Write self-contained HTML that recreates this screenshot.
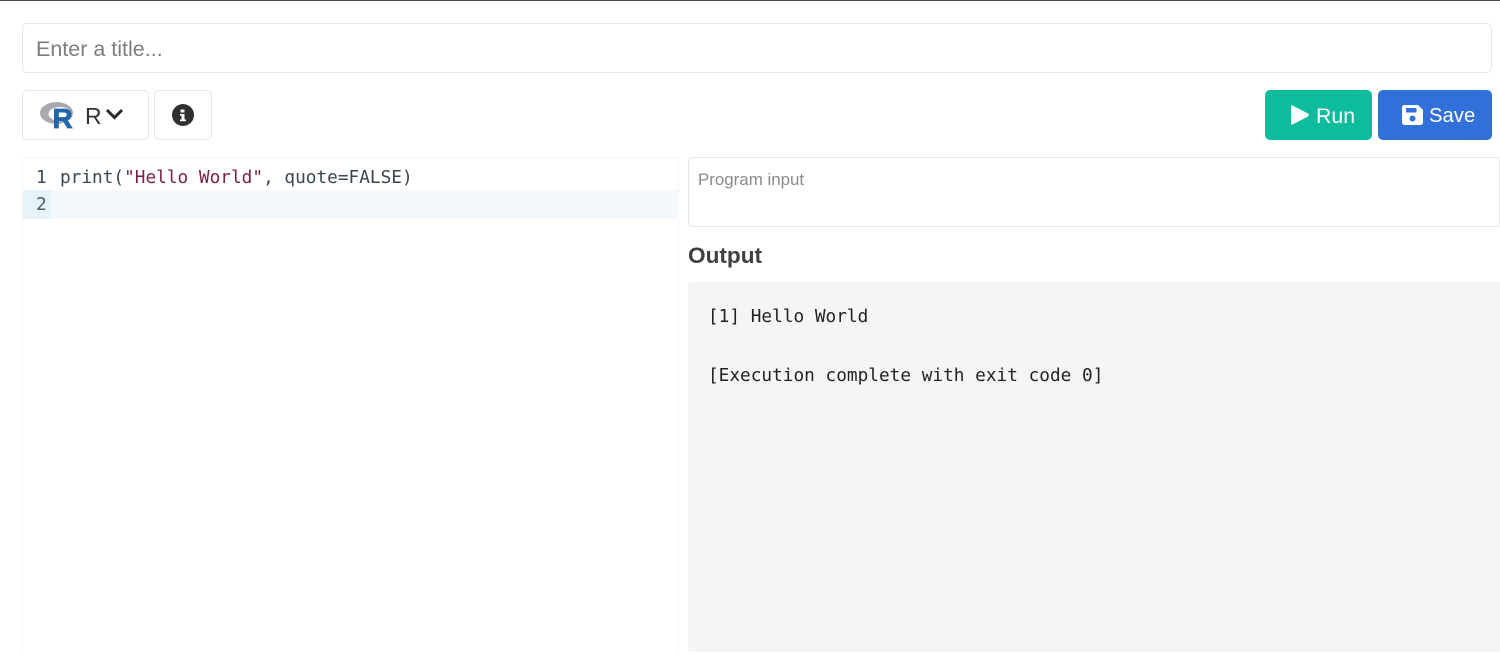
<!DOCTYPE html>
<html><head><meta charset="utf-8"><style>
*{box-sizing:border-box}
html,body{margin:0;padding:0;background:#fff;width:1500px;height:655px;overflow:hidden}
body{position:relative;font-family:"Liberation Sans",sans-serif;color:#363636}
.a{position:absolute}
.box{position:absolute;border:1px solid #e6e6e6;border-radius:5px;background:#fff}
.mono{font-family:"DejaVu Sans Mono",monospace;font-size:17.75px;white-space:pre;line-height:24px}
.btn{position:absolute;border-radius:5px;top:90px;height:50px}
</style></head><body>
<div class="a" style="left:0;top:0;width:1500px;height:1px;background:#4a4a4a"></div>
<div class="box" style="left:22px;top:23px;width:1470px;height:50px"></div>
<div class="a" style="left:36px;top:36px;font-size:21.5px;line-height:27px;color:#7d7d7d">Enter a title...</div>

<div class="box" style="left:22px;top:90px;width:127px;height:50px"></div>
<svg class="a" style="left:38px;top:100px" width="38" height="30" viewBox="0 0 38 30">
<ellipse cx="18.500" cy="13" rx="16.500" ry="11" fill="#a8a9ad"/>
<ellipse cx="22" cy="14" rx="11.500" ry="7" fill="#fff"/>
<text x="14.500" y="28" font-family="Liberation Sans" font-weight="bold" font-size="28" fill="#2166ac" stroke="#2166ac" stroke-width=".8">R</text>
</svg>
<div class="a" style="left:85px;top:102px;font-size:23px;line-height:28px;color:#333">R</div>
<svg class="a" style="left:105px;top:107px" width="19" height="14" viewBox="0 0 19 14"><path d="M2 3l7.500 7.500L17 3" fill="none" stroke="#2b2b2b" stroke-width="3"/></svg>

<div class="box" style="left:154px;top:90px;width:58px;height:50px"></div>
<svg class="a" style="left:172px;top:104px" width="22" height="22" viewBox="0 0 22 22">
<circle cx="11" cy="11" r="11" fill="#2f2f2f"/>
<path d="M8.500 5.500h4v3h-4zM8 10h4.500v5.500H14v1.800H8v-1.800h1.500v-3.700H8z" fill="#fff"/>
</svg>

<div class="btn" style="left:1265px;width:107px;background:#0cbc9d"></div>
<svg class="a" style="left:1290px;top:104px" width="20" height="22" viewBox="0 0 20 22"><path d="M2.500 1.500Q1 1 1 3V19Q1 21 2.500 20.500L18 12.500Q19.500 11 18 9.500Z" fill="#fff"/></svg>
<div class="a" style="left:1316px;top:102px;color:#fff;font-size:21.300px;line-height:28px">Run</div>

<div class="btn" style="left:1378px;width:114px;background:#3170d8"></div>
<svg class="a" style="left:1402px;top:105px" width="21" height="20" viewBox="0 0 21 20"><path fill-rule="evenodd" d="M2.500 0H16l5 5V17.500A2.500 2.500 0 0 1 18.500 20H2.500A2.500 2.500 0 0 1 0 17.500V2.500A2.500 2.500 0 0 1 2.500 0ZM4 3V7.500H14.500V3ZM10.500 10.500a3 3 0 1 0 .01 0Z" fill="#fff"/></svg>
<div class="a" style="left:1429px;top:102px;color:#fff;font-size:20.300px;line-height:28px">Save</div>

<div class="a" style="left:22px;top:157px;width:657px;height:498px;border:1px solid #f6f6f6;border-bottom:0;background:#fff"></div>
<div class="a" style="left:23px;top:190px;width:655px;height:29px;background:#f3f9fd"></div>
<div class="a" style="left:23px;top:190px;width:28px;height:29px;background:#e8f2f9"></div>
<div class="a mono" style="left:36px;top:165px;color:#3c4a55;transform:translateY(1px)">1</div>
<div class="a mono" style="left:36px;top:193px;color:#4d5b66">2</div>
<div class="a mono" style="left:60px;top:166px;color:#3a4650">print(<span style="color:#7b1f45">"Hello World"</span>, quote=FALSE)</div>

<div class="box" style="left:688px;top:157px;width:812px;height:70px;border-radius:4px"></div>
<div class="a" style="left:698px;top:169px;font-size:16.900px;line-height:21px;color:#8a8a8a">Program input</div>
<div class="a" style="left:688px;top:242px;font-size:22.600px;line-height:27px;font-weight:bold;color:#404040">Output</div>
<div class="a" style="left:688px;top:282px;width:812px;height:370px;background:#f5f5f5;border-radius:4px 0 0 4px"></div>
<div class="a mono" style="left:708px;top:305px;color:#222">[1] Hello World</div>
<div class="a mono" style="left:708px;top:364px;color:#222">[Execution complete with exit code 0]</div>
</body></html>
